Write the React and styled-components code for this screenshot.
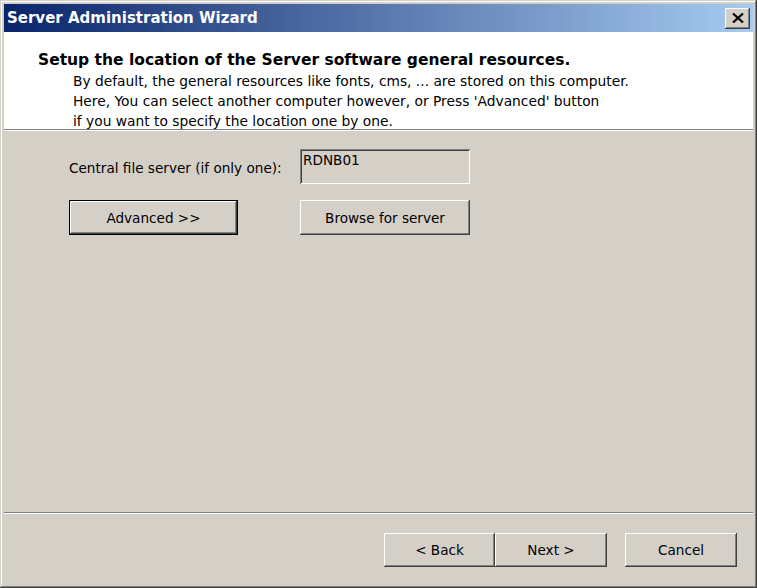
import React from "react";
import styled, { createGlobalStyle } from "styled-components";

const Global = createGlobalStyle`
  html, body { margin: 0; padding: 0; background: #d4d0c8; }
  body { font-family: "DejaVu Sans", Verdana, sans-serif; }
  * { box-sizing: border-box; }
`;

const Window = styled.div`
  width: 757px;
  height: 588px;
  padding: 4px;
  background: #d4d0c8;
  display: flex;
  flex-direction: column;
  box-shadow: inset -1px -1px #404040, inset 1px 1px #d4d0c8,
    inset -2px -2px #808080, inset 2px 2px #ffffff;
`;

const TitleBar = styled.div`
  height: 28px;
  flex: none;
  display: flex;
  align-items: center;
  justify-content: space-between;
  padding: 0 3px 0 3px;
  background: linear-gradient(to right, #0a246a, #a6caf0);
`;

const Title = styled.span`
  color: #ffffff;
  font-family: "DejaVu Sans", Verdana, sans-serif;
  font-weight: bold;
  font-size: 15px;
`;

const CloseButton = styled.button`
  width: 25px;
  height: 21px;
  padding: 0;
  border: none;
  background: #d4d0c8;
  display: flex;
  align-items: center;
  justify-content: center;
  box-shadow: inset -1px -1px #404040, inset 1px 1px #ffffff,
    inset -2px -2px #808080, inset 2px 2px #d4d0c8;
`;

const Header = styled.div`
  height: 97px;
  flex: none;
  background: #ffffff;
  padding: 18px 0 0 34px;
`;

const HeaderTitle = styled.div`
  font-weight: bold;
  font-size: 15.5px;
  line-height: 20px;
  color: #000;
`;

const HeaderText = styled.div`
  margin: 1px 0 0 35px;
  font-size: 13.8px;
  line-height: 20px;
  color: #000;
`;

const Separator = styled.div`
  height: 2px;
  flex: none;
  border-top: 1px solid #808080;
  border-bottom: 1px solid #ffffff;
`;

const Body = styled.div`
  flex: 1;
  padding: 18px 0 0 65px;
  display: grid;
  grid-template-columns: 231px 170px;
  grid-auto-rows: 35px;
  row-gap: 16px;
  align-content: start;
`;

const Label = styled.span`
  font-size: 13.6px;
  color: #000;
  align-self: center;
  padding-top: 3px;
`;

const TextBox = styled.div`
  height: 35px;
  background: #d4d0c8;
  padding: 3px 3px;
  font-size: 13.6px;
  line-height: 16px;
  color: #000;
  box-shadow: inset 1px 1px #808080, inset -1px -1px #ffffff,
    inset 2px 2px #404040, inset -2px -2px #d4d0c8;
`;

const Button = styled.button`
  width: ${(p) => p.$w || 170}px;
  height: ${(p) => p.$h || 35}px;
  padding: 0;
  border: ${(p) => (p.$default ? "1px solid #000" : "none")};
  background: #d4d0c8;
  font-family: "DejaVu Sans", Verdana, sans-serif;
  font-size: 13.6px;
  color: #000;
  box-shadow: inset -1px -1px #404040, inset 1px 1px #ffffff,
    inset -2px -2px #808080, inset 2px 2px #d4d0c8;
`;

const Footer = styled.div`
  height: 70px;
  flex: none;
  display: flex;
  justify-content: flex-end;
  align-items: flex-start;
  padding: 19px 16px 0 0;
`;

const NavGroup = styled.div`
  display: flex;
  margin-right: 18px;
`;

export default function App() {
  return (
    <>
      <Global />
      <Window>
        <TitleBar>
          <Title>Server Administration Wizard</Title>
          <CloseButton aria-label="Close">
            <svg width="12" height="10" viewBox="0 0 12 10">
              <path d="M1 0.5 L11 9.5 M11 0.5 L1 9.5" stroke="#000" strokeWidth="2.2" />
            </svg>
          </CloseButton>
        </TitleBar>
        <Header>
          <HeaderTitle>Setup the location of the Server software general resources.</HeaderTitle>
          <HeaderText>
            By default, the general resources like fonts, cms, ... are stored on this computer.
            <br />
            Here, You can select another computer however, or Press 'Advanced' button
            <br />
            if you want to specify the location one by one.
          </HeaderText>
        </Header>
        <Separator />
        <Body>
          <Label>Central file server (if only one):</Label>
          <TextBox>RDNB01</TextBox>
          <Button $default $w={169}>Advanced &gt;&gt;</Button>
          <Button>Browse for server</Button>
        </Body>
        <Separator />
        <Footer>
          <NavGroup>
            <Button $w={111} $h={34}>&lt; Back</Button>
            <Button $w={112} $h={34}>Next &gt;</Button>
          </NavGroup>
          <Button $w={112} $h={34}>Cancel</Button>
        </Footer>
      </Window>
    </>
  );
}
